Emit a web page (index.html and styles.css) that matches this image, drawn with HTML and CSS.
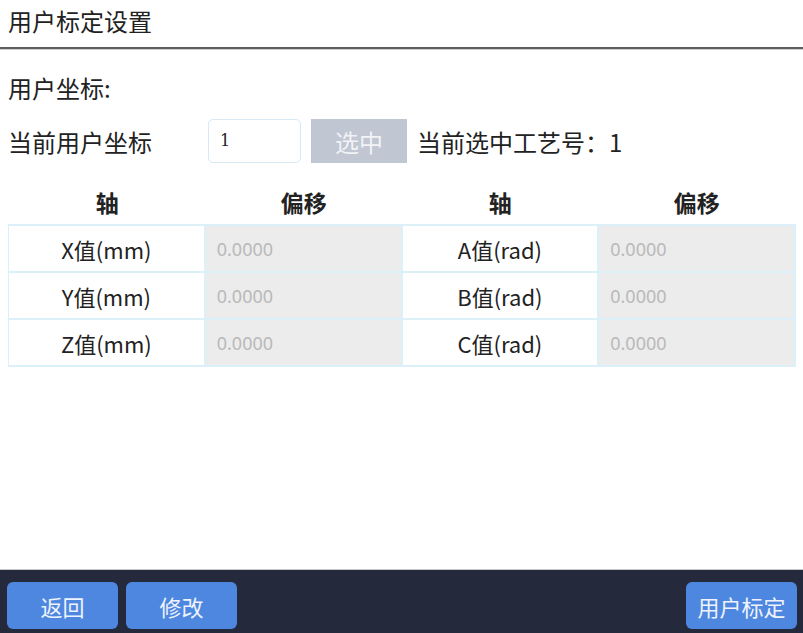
FILE: index.html
```html
<!DOCTYPE html>
<html lang="zh">
<head>
<meta charset="utf-8">
<link rel="stylesheet" href="styles.css">
</head>
<body>
<div class="page">
  <header class="titlebar">用户标定设置</header>
  <main class="content">
    <div class="section-label">用户坐标:</div>
    <div class="coord-row">
      <span class="coord-name">当前用户坐标</span>
      <div class="coord-input">1</div>
      <button class="select-btn">选中</button>
      <span class="current">当前选中工艺号：1</span>
    </div>
    <div class="table-head">
      <div>轴</div><div>偏移</div><div>轴</div><div>偏移</div>
    </div>
    <div class="grid">
      <div class="lbl">X值(mm)</div><div class="val">0.0000</div>
      <div class="lbl">A值(rad)</div><div class="val">0.0000</div>
      <div class="lbl">Y值(mm)</div><div class="val">0.0000</div>
      <div class="lbl">B值(rad)</div><div class="val">0.0000</div>
      <div class="lbl">Z值(mm)</div><div class="val">0.0000</div>
      <div class="lbl">C值(rad)</div><div class="val">0.0000</div>
    </div>
  </main>
  <footer class="footer">
    <button class="fbtn">返回</button>
    <button class="fbtn">修改</button>
    <span class="spacer"></span>
    <button class="fbtn">用户标定</button>
  </footer>
</div>
</body>
</html>
```
FILE: styles.css
```css
* { box-sizing: border-box; }
html, body { margin: 0; padding: 0; }
body {
  font-family: "Noto Sans CJK SC", "Noto Sans", sans-serif;
  color: #222;
  background: #fff;
}
.page {
  width: 803px;
  height: 633px;
  display: flex;
  flex-direction: column;
}
.titlebar {
  height: 49px;
  padding: 4px 0 0 8px;
  font-size: 24px;
  line-height: 34px;
  border-bottom: 2px solid #5e5e5e;
  box-shadow: 0 1px 0 #cfcfcf;
}
.content {
  flex: 1;
  padding: 0 7px 0 8px;
}
.section-label {
  font-size: 24px;
  line-height: 34px;
  margin-top: 22px;
}
.coord-row {
  display: flex;
  align-items: center;
  margin-top: 14px;
  height: 44px;
}
.coord-name {
  font-size: 24px;
  width: 200px;
}
.coord-input {
  width: 93px;
  height: 44px;
  border: 1px solid #d6e9f5;
  border-radius: 5px;
  font-family: "DejaVu Serif", serif;
  font-size: 16px;
  line-height: 42px;
  padding-left: 11px;
  color: #222;
}
.select-btn {
  width: 96px;
  height: 44px;
  margin-left: 10px;
  border: none;
  background: #c0c6d2;
  color: #f2f3f6;
  font-family: inherit;
  font-size: 24px;
  padding: 0;
}
.current {
  font-size: 24px;
  margin-left: 10px;
}
.table-head {
  display: grid;
  grid-template-columns: repeat(4, 1fr);
  padding: 0 2px;
  column-gap: 2px;
  height: 46px;
  margin-top: 15px;
  padding-top: 2px;
  align-items: center;
  font-size: 23px;
  font-weight: bold;
  text-align: center;
}
.grid {
  display: grid;
  grid-template-columns: repeat(4, 1fr);
  grid-auto-rows: 45px;
  gap: 2px;
  padding: 2px 2px 2px 1px;
  background: #dcf0f9;
}
.lbl {
  background: #fff;
  display: flex;
  align-items: center;
  justify-content: center;
  font-size: 22px;
  color: #222;
}
.val {
  background: #ececec;
  display: flex;
  align-items: center;
  padding-left: 11px;
  font-family: "Noto Sans", sans-serif;
  font-size: 18px;
  color: #b9b9b9;
}
.footer {
  height: 64px;
  background: #242a3c;
  border-top: 1px solid #c9c9c9;
  display: flex;
  align-items: flex-start;
  padding: 12px 6px 0 7px;
  gap: 8px;
}
.spacer { flex: 1; }
.fbtn {
  width: 111px;
  height: 47px;
  border: none;
  border-radius: 6px;
  background: #4e87e0;
  color: #eef3fc;
  font-family: inherit;
  font-size: 22px;
  padding: 0;
}
```
